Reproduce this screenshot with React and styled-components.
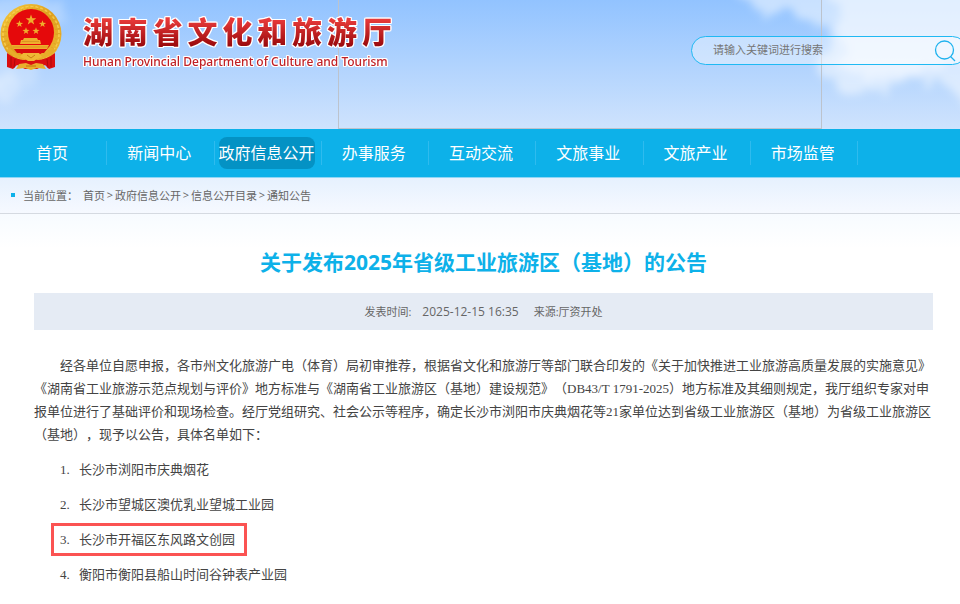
import React from "react";
import styled, { createGlobalStyle } from "styled-components";

const sans = `"Open Sans", "Noto Sans CJK SC", sans-serif`;

const GlobalStyle = createGlobalStyle`
    body {
        margin: 0;
        background: #fff;
        color: #444;
        font-family: ${sans};
    }
    * {
        box-sizing: border-box;
    }
    a {
        color: inherit;
        text-decoration: none;
    }
`;

/* ---------- header ---------- */

const Header = styled.header`
    position: relative;
    overflow: hidden;
    display: flex;
    justify-content: space-between;
    height: 129px;
    background: linear-gradient(#92c3ff, #cfe3fd);
`;

const Sky = styled.svg`
    position: absolute;
    top: 0;
    width: 340px;
    height: 129px;
    ${props => (props.$side === "left" ? "left: 0;" : "right: 0;")}
`;

const EmptyFrame = styled.div`
    position: absolute;
    top: 0;
    bottom: 0;
    left: 338px;
    width: 484px;
    border: 1px solid #bcc3cd;
    border-top: 0;
`;

const Brand = styled.a`
    position: relative;
    display: flex;
    align-items: flex-start;
    gap: 21px;
    padding-top: 3px;
`;

const BrandText = styled.div`
    min-width: 309px;
    padding-top: 8px;
    filter: drop-shadow(1px 0 0 #fff) drop-shadow(-1px 0 0 #fff)
        drop-shadow(0 1px 0 #fff) drop-shadow(0 -1px 0 #fff);
`;

const BrandName = styled.h1`
    margin: 0;
    font-size: 30px;
    line-height: 42px;
    font-weight: 900;
    text-align-last: justify;
    color: transparent;
    background: linear-gradient(#e83a3a 20%, #98080b 85%);
    background-clip: text;
`;

const BrandEnglish = styled.div`
    font-family: "Noto Sans", sans-serif;
    font-size: 12px;
    line-height: 18px;
    font-weight: 500;
    white-space: nowrap;
    color: #c02026;
`;

const Search = styled.form`
    position: relative;
    display: flex;
    align-items: center;
    width: 276px;
    height: 29px;
    margin: 36px -7px 0 0;
    padding: 0 10px 0 21px;
    border: 1px solid #1fb9f3;
    border-radius: 15px;
    background: rgba(255, 255, 255, 0.4);
`;

const SearchInput = styled.input`
    flex: 1;
    min-width: 0;
    padding: 0 0 2px;
    border: 0;
    outline: 0;
    background: transparent;
    font-family: ${sans};
    font-size: 11px;
    color: #555;
    &::placeholder {
        color: #757575;
    }
`;

const SearchButton = styled.button`
    display: flex;
    padding: 0;
    border: 0;
    background: transparent;
    cursor: pointer;
`;

/* ---------- navigation ---------- */

const Nav = styled.nav`
    background: #0db1e9;
    border-bottom: 1px solid #8fd6f5;
`;

const NavList = styled.ul`
    display: grid;
    grid-template-columns: repeat(8, 1fr);
    max-width: 858px;
    margin: 0;
    padding: 8px 0;
    list-style: none;
`;

const NavItem = styled.li`
    display: flex;
    justify-content: center;
    padding-right: 3px;
    background: linear-gradient(#2fbbee, #2fbbee) right center / 1px 24px
        no-repeat;
`;

const NavLink = styled.a`
    padding-top: 1px;
    border-radius: 8px;
    font-size: 16px;
    line-height: 31px;
    white-space: nowrap;
    color: #fff;
    background: ${props => (props.$active ? "#0492c4" : "transparent")};
`;

/* ---------- article ---------- */

const Crumbs = styled.div`
    display: flex;
    align-items: center;
    height: 36px;
    padding: 0 0 2px 11px;
    border-bottom: 1px solid #d5dae1;
    background: linear-gradient(#e6f1fe, #f6f9ff);
    font-size: 11px;
    color: #666;
`;

const Bullet = styled.span`
    width: 4px;
    height: 4px;
    margin-right: 8px;
    background: #0db1e9;
`;

const CrumbLabel = styled.span`
    width: 60px;
`;

const CrumbArrow = styled.span`
    width: 10px;
    text-align: center;
`;

const Article = styled.main`
    padding: 33px 27px 16px 34px;
    background: linear-gradient(#f7fbff, #fff 34px);
`;

const Title = styled.h2`
    margin: 0 0 15px;
    font-size: 21px;
    line-height: 31px;
    font-weight: 700;
    text-align: center;
    color: #0db1e9;
    text-spacing-trim: space-all;
`;

const Meta = styled.div`
    display: flex;
    justify-content: center;
    height: 37px;
    margin-bottom: 24px;
    background: #e5ebf4;
    font-size: 11px;
    line-height: 37px;
    color: #666;
`;

const Time = styled.time`
    margin: 0 15px 0 11px;
    font-size: 12px;
`;

const Body = styled.div`
    font-family: "Liberation Serif", "Noto Sans CJK SC", serif;
    font-size: 13px;
    line-height: 23px;
    text-spacing-trim: space-all;
`;

const Paragraph = styled.p`
    margin: 0 0 12px;
    text-indent: 26px;
`;

const PlaceList = styled.ol`
    display: flex;
    flex-direction: column;
    align-items: flex-start;
    gap: 12px;
    margin: 0;
    padding: 0 0 0 26px;
    list-style: none;
`;

const Place = styled.li`
    position: relative;
    display: flex;
    ${props =>
        props.$marked &&
        `
        &::after {
            content: "";
            position: absolute;
            inset: -5px -12px -5px -9px;
            border: 3px solid #fb5352;
        }
    `}
`;

const PlaceNumber = styled.span`
    width: 19px;
`;

const navItems = [
    "首页",
    "新闻中心",
    "政府信息公开",
    "办事服务",
    "互动交流",
    "文旅事业",
    "文旅产业",
    "市场监管"
];

const crumbs = ["首页", "政府信息公开", "信息公开目录", "通知公告"];

const places = [
    { name: "长沙市浏阳市庆典烟花" },
    { name: "长沙市望城区澳优乳业望城工业园" },
    { name: "长沙市开福区东风路文创园", marked: true },
    { name: "衡阳市衡阳县船山时间谷钟表产业园" }
];

const star = "M0-5 1.2-1.6 4.8-1.5 1.9.6 2.9 4 0 2-2.9 4-1.9.6-4.8-1.5-1.2-1.6Z";

function Emblem() {
    return (
        <svg width="62" height="69" viewBox="0 0 62 69" aria-hidden="true">
            <defs>
                <linearGradient id="gold" x1="0" y1="0" x2="1" y2="1">
                    <stop offset="0" stopColor="#f6cb3c" />
                    <stop offset="0.5" stopColor="#e0a01e" />
                    <stop offset="1" stopColor="#f0bd35" />
                </linearGradient>
            </defs>
            <ellipse cx="31" cy="31" rx="30.5" ry="30" fill="url(#gold)" />
            <ellipse
                cx="31"
                cy="31"
                rx="27"
                ry="26"
                fill="none"
                stroke="#c98616"
                strokeWidth="5"
                strokeDasharray="1 4"
                opacity="0.3"
            />
            <ellipse
                cx="31"
                cy="31"
                rx="28"
                ry="27.5"
                fill="none"
                stroke="#ffdf63"
                strokeWidth="1.5"
                strokeDasharray="3 2"
                opacity="0.6"
            />
            <ellipse cx="31" cy="29.5" rx="23" ry="23.5" fill="#e5090b" />
            <g fill="#efad2c">
                <path d={star} transform="translate(31 17) scale(1.1)" />
                <path d={star} transform="translate(19.5 21) scale(.75)" />
                <path d={star} transform="translate(42.5 21) scale(.75)" />
                <path d={star} transform="translate(26 28) scale(.75)" />
                <path d={star} transform="translate(36 28) scale(.75)" />
                <path d="M24 35H37L38 37H40L41 41H20L21 37H23Z" />
                <path d="M11 42H49L47 46H14Z" />
            </g>
            <path d="M22 38.5H39M13 44H48" stroke="#cf851b" strokeWidth="0.6" />
            <path d="M14 46H47L44 50H17Z" fill="#d90d0d" />
            <path
                d="M7 50Q16 57 25 57L31 54 37 57Q46 57 55 50L55 64 49 66 45 62 37 66H25L17 62 13 66 7 64Z"
                fill="#da0f10"
            />
            <path
                d="M11 54V64M15 56 14 65M51 54V64M47 56 48 65"
                stroke="#a3080a"
                strokeWidth="0.8"
            />
            <path
                d="M8 46Q15 54 25 55M54 46Q47 54 37 55"
                fill="none"
                stroke="#e8ad29"
                strokeWidth="4"
            />
            <path
                d="M23 50H39L42 54 37 56 34 58H28L25 56 20 54Z"
                fill="#efb935"
            />
            <path d="M27 52 31 55 35 52" fill="none" stroke="#c97f14" strokeWidth="1" />
            <path
                d="M19 61 26 60 31 62 36 60 43 61 46 66 37 65 31 67 25 65 16 66Z"
                fill="#e9ae2c"
            />
            <path d="M26 63H36" stroke="#c2730f" strokeWidth="1" />
        </svg>
    );
}

function CloudFilter({ id, seed }) {
    return (
        <filter id={id} x="-30%" y="-30%" width="160%" height="160%">
            <feTurbulence
                type="fractalNoise"
                baseFrequency="0.05"
                numOctaves="4"
                seed={seed}
                result="noise"
            />
            <feDisplacementMap
                in="SourceGraphic"
                in2="noise"
                scale="36"
                xChannelSelector="R"
                yChannelSelector="G"
            />
            <feGaussianBlur stdDeviation="4" />
        </filter>
    );
}

function Clouds() {
    return (
        <>
            <Sky $side="left" aria-hidden="true">
                <CloudFilter id="cloudLeft" seed="4" />
                <g fill="#fff" filter="url(#cloudLeft)">
                    <ellipse cx="22" cy="12" rx="50" ry="18" opacity="0.25" />
                    <ellipse cx="4" cy="54" rx="32" ry="40" opacity="0.2" />
                    <ellipse cx="4" cy="88" rx="12" ry="16" opacity="0.3" />
                </g>
            </Sky>
            <Sky $side="right" aria-hidden="true">
                <CloudFilter id="cloudRight" seed="8" />
                <g fill="#fff" filter="url(#cloudRight)">
                    <path
                        d="M120-20H400V125L345 110 335 82 305 78 275 86 240 92 215 88 206 68 194 62 208 44 208 28 188 22 168 12 128 8Z"
                        opacity="0.5"
                    />
                    <path
                        d="M210-20H400V68L330 66 290 76 245 78 220 70 222 26Z"
                        opacity="0.45"
                    />
                </g>
            </Sky>
        </>
    );
}

export default function App() {
    return (
        <>
            <GlobalStyle />
            <Header>
                <Clouds />
                <EmptyFrame />
                <Brand href="#">
                    <Emblem />
                    <BrandText>
                        <BrandName>湖南省文化和旅游厅</BrandName>
                        <BrandEnglish>
                            Hunan Provincial Department of Culture and Tourism
                        </BrandEnglish>
                    </BrandText>
                </Brand>
                <Search role="search">
                    <SearchInput
                        type="text"
                        aria-label="搜索"
                        placeholder="请输入关键词进行搜索"
                    />
                    <SearchButton type="button" aria-label="搜索">
                        <svg
                            width="22"
                            height="22"
                            viewBox="0 0 22 22"
                            fill="none"
                            stroke="#1fb2ee"
                            strokeWidth="1.3"
                        >
                            <circle cx="10.5" cy="10" r="9" />
                            <path d="M16.5 16.5 21 21" />
                        </svg>
                    </SearchButton>
                </Search>
            </Header>
            <Nav>
                <NavList>
                    {navItems.map(item => (
                        <NavItem key={item}>
                            <NavLink href="#" $active={item === "政府信息公开"}>
                                {item}
                            </NavLink>
                        </NavItem>
                    ))}
                </NavList>
            </Nav>
            <Crumbs>
                <Bullet />
                <CrumbLabel>当前位置：</CrumbLabel>
                {crumbs.map((item, index) => (
                    <React.Fragment key={item}>
                        {index > 0 && <CrumbArrow>&gt;</CrumbArrow>}
                        <a href="#">{item}</a>
                    </React.Fragment>
                ))}
            </Crumbs>
            <Article>
                <Title>关于发布2025年省级工业旅游区（基地）的公告</Title>
                <Meta>
                    <span>发表时间:</span>
                    <Time>2025-12-15 16:35</Time>
                    <span>来源:厅资开处</span>
                </Meta>
                <Body>
                    <Paragraph>
                        经各单位自愿申报，各市州文化旅游广电（体育）局初审推荐，根据省文化和旅游厅等部门联合印发的《关于加快推进工业旅游高质量发展的实施意见》《湖南省工业旅游示范点规划与评价》地方标准与《湖南省工业旅游区（基地）建设规范》（DB43/T 1791-2025）地方标准及其细则规定，我厅组织专家对申报单位进行了基础评价和现场检查。经厅党组研究、社会公示等程序，确定长沙市浏阳市庆典烟花等21家单位达到省级工业旅游区（基地）为省级工业旅游区（基地），现予以公告，具体名单如下：
                    </Paragraph>
                    <PlaceList>
                        {places.map((place, index) => (
                            <Place key={place.name} $marked={place.marked}>
                                <PlaceNumber>{index + 1}.</PlaceNumber>
                                {place.name}
                            </Place>
                        ))}
                    </PlaceList>
                </Body>
            </Article>
        </>
    );
}
